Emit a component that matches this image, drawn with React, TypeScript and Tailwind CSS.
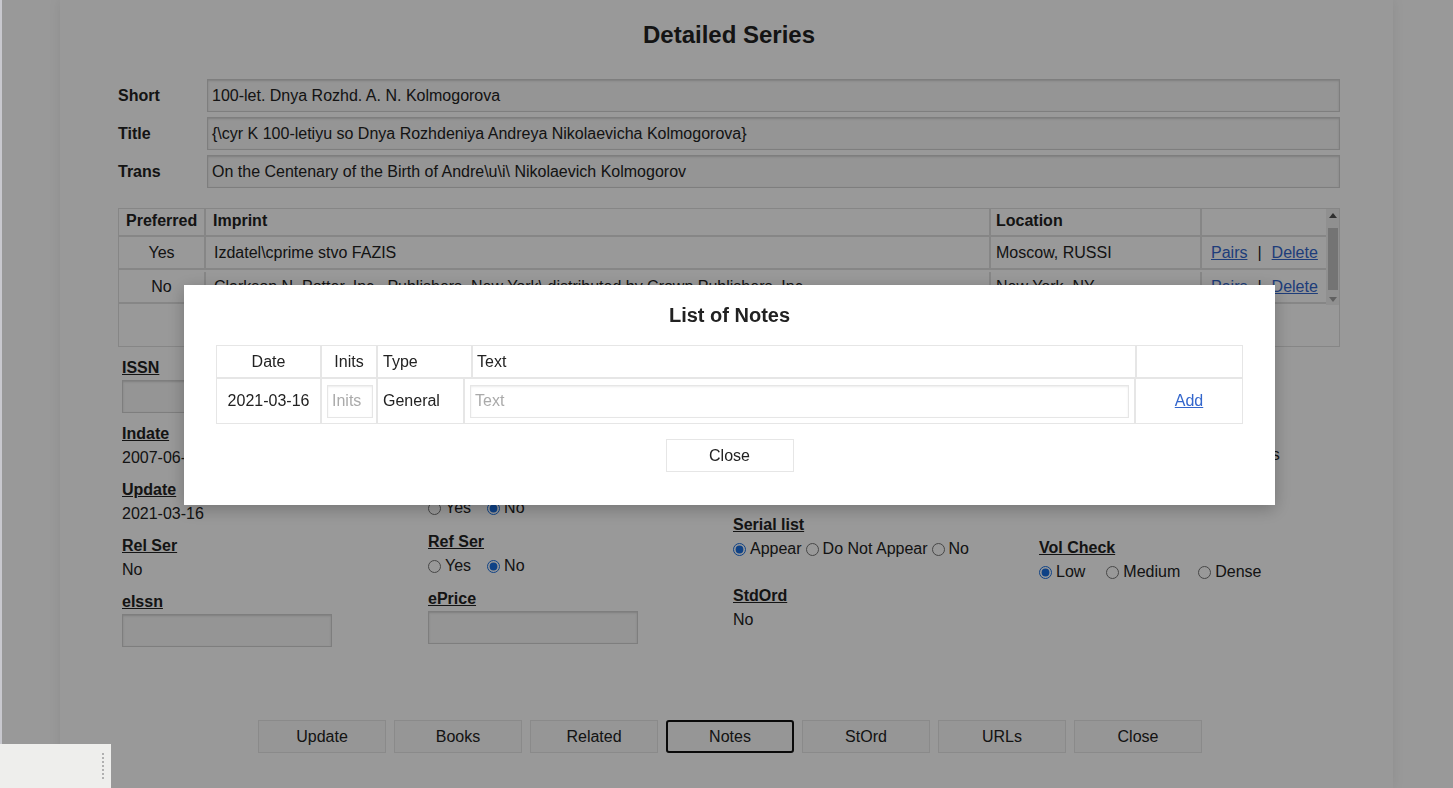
import React from 'react';

const font = "font-['Liberation_Sans',Arial,sans-serif]";

const Label: React.FC<{ children: React.ReactNode }> = ({ children }) => (
  <div className="font-bold underline leading-6 text-[#222]">{children}</div>
);

const Value: React.FC<{ children: React.ReactNode }> = ({ children }) => (
  <div className="leading-6 text-[#222]">{children}</div>
);

const Radio: React.FC<{ name: string; label: string; checked?: boolean; className?: string }> = ({
  name,
  label,
  checked,
  className,
}) => (
  <label className={`inline-flex items-center ${className ?? ''}`}>
    <input type="radio" name={name} defaultChecked={checked} className="m-0 mr-[4px] w-[13px] h-[13px] accent-[#1a6fe0]" />
    <span>{label}</span>
  </label>
);

const TextBox: React.FC<{ value?: string }> = ({ value }) => (
  <div className="flex-1 h-[33px] border border-[#d2d2d2] bg-[#f8f8f8] shadow-[inset_0_1px_2px_rgba(0,0,0,0.15)] px-[4px] flex items-center text-[#222] whitespace-nowrap overflow-hidden">
    {value}
  </div>
);

const imprints = [
  { pref: 'Yes', imprint: 'Izdatel\\cprime stvo FAZIS', loc: 'Moscow, RUSSI', h: 'h-[33px] pt-[1px]' },
  {
    pref: 'No',
    imprint: 'Clarkson N. Potter, Inc., Publishers, New York\\ distributed by Crown Publishers, Inc.',
    loc: 'New York, NY',
    h: 'h-[34px] pt-[2px]',
  },
];

const buttons = ['Update', 'Books', 'Related', 'Notes', 'StOrd', 'URLs', 'Close'];

export default function App() {
  return (
    <div className={`${font} text-[16px] bg-white min-h-screen overflow-hidden`}>
      {/* page */}
      <div className="w-[1333px] mx-auto min-h-[788px] pl-[58px] pr-[53px] pt-[21px] shadow-[0_0_12px_rgba(0,0,0,0.08)]">
        <h1 className="text-center text-[24px] leading-[28px] font-bold text-[#222]">Detailed Series</h1>

        <div className="mt-[30px] space-y-[5px]">
          {[
            ['Short', '100-let. Dnya Rozhd. A. N. Kolmogorova'],
            ['Title', '{\\cyr K 100-letiyu so Dnya Rozhdeniya Andreya Nikolaevicha Kolmogorova}'],
            ['Trans', 'On the Centenary of the Birth of Andre\\u\\i\\ Nikolaevich Kolmogorov'],
          ].map(([l, v]) => (
            <div key={l} className="flex items-center">
              <div className="w-[89px] font-bold text-[#222]">{l}</div>
              <TextBox value={v} />
            </div>
          ))}
        </div>

        {/* imprint table */}
        <div className="mt-5 h-[139px] border border-[#e0e0e0] flex items-start">
          <div className="flex-1">
            <div className="grid grid-cols-[87px_785px_211px_124px] h-[28px] border-b-2 border-[#e0e0e0] font-bold text-[#222]">
              <div className="pl-[7px] pb-[5px] flex items-center border-r-2 border-[#e0e0e0]">Preferred</div>
              <div className="pl-[7px] pb-[5px] flex items-center border-r-2 border-[#e0e0e0]">Imprint</div>
              <div className="pl-[5px] pb-[5px] flex items-center border-r-2 border-[#e0e0e0]">Location</div>
              <div />
            </div>
            {imprints.map((r, i) => (
              <div
                key={i}
                className={`grid grid-cols-[87px_785px_211px_124px] border-b-2 border-[#e0e0e0] text-[#222] ${r.h}`}
              >
                <div className="flex items-center justify-center border-r-2 border-[#e0e0e0]">{r.pref}</div>
                <div className="pl-[8px] flex items-center border-r-2 border-[#e0e0e0] whitespace-nowrap overflow-hidden">
                  {r.imprint}
                </div>
                <div className="pl-[5px] flex items-center border-r-2 border-[#e0e0e0]">{r.loc}</div>
                <div className="pl-[9px] flex items-center gap-[10px] whitespace-nowrap">
                  <a className="text-[#3366cc] underline">Pairs</a>
                  <span>|</span>
                  <a className="text-[#3366cc] underline">Delete</a>
                </div>
              </div>
            ))}
          </div>
          {/* scrollbar */}
          <div className="w-[14px] h-[96px] bg-[#f1f1f1] flex flex-col items-center">
            <div className="h-[12px] flex items-center justify-center">
              <div className="w-0 h-0 border-l-[4px] border-r-[4px] border-b-[5px] border-l-transparent border-r-transparent border-b-[#505050]" />
            </div>
            <div className="mt-[7px] w-[10px] h-[62px] bg-[#c1c1c1]" />
            <div className="flex-1" />
            <div className="h-[12px] flex items-center justify-center">
              <div className="w-0 h-0 border-l-[4px] border-r-[4px] border-t-[5px] border-l-transparent border-r-transparent border-t-[#a0a0a0]" />
            </div>
          </div>
        </div>

        {/* fields */}
        <div className="mt-[9px] pl-1 grid grid-cols-[306px_305px_306px_1fr] text-[#222]">
          <div>
            <Label>ISSN</Label>
            <div className="flex w-[210px]"><TextBox /></div>
            <div className="mt-[9px]"><Label>Indate</Label></div>
            <Value>2007-06-13</Value>
            <div className="mt-2"><Label>Update</Label></div>
            <Value>2021-03-16</Value>
            <div className="mt-2"><Label>Rel Ser</Label></div>
            <Value>No</Value>
            <div className="mt-2"><Label>eIssn</Label></div>
            <div className="flex w-[210px]"><TextBox /></div>
          </div>

          <div>
            <Label>Pub Type</Label>
            <Value>Series</Value>
            <div className="mt-2"><Label>Language</Label></div>
            <Value>Russian</Value>
            <div className="mt-[12px]"><Label>Main Ser</Label></div>
            <div className="leading-6 flex">
              <Radio name="main" label="Yes" className="mr-4" />
              <Radio name="main" label="No" checked />
            </div>
            <div className="mt-[10px]"><Label>Ref Ser</Label></div>
            <div className="leading-6 flex">
              <Radio name="ref" label="Yes" className="mr-4" />
              <Radio name="ref" label="No" checked />
            </div>
            <div className="mt-[9px]"><Label>ePrice</Label></div>
            <div className="flex w-[210px]"><TextBox /></div>
          </div>

          <div>
            <Label>Publisher</Label>
            <div className="flex w-[210px]"><TextBox /></div>
            <div className="mt-2"><Label>Country</Label></div>
            <Value>Russia</Value>
            <div className="mt-[44px]"><Label>Serial list</Label></div>
            <div className="leading-6 flex gap-[4px]">
              <Radio name="serial" label="Appear" checked />
              <Radio name="serial" label="Do Not Appear" />
              <Radio name="serial" label="No" />
            </div>
            <div className="mt-[23px]"><Label>StdOrd</Label></div>
            <Value>No</Value>
          </div>

          <div>
            <Label>Price</Label>
            <div className="flex w-[210px]"><TextBox /></div>
            <div className="mt-[6px]"><Label>Kind</Label></div>
            <Value>Collected Works and Proceedings</Value>
            <div className="mt-[69px]"><Label>Vol Check</Label></div>
            <div className="leading-6 flex">
              <Radio name="vol" label="Low" checked className="mr-[21px]" />
              <Radio name="vol" label="Medium" className="mr-[18px]" />
              <Radio name="vol" label="Dense" />
            </div>
          </div>
        </div>

        <div className="mt-[73px] pl-[2px] flex justify-center gap-2">
          {buttons.map(b => (
            <button
              key={b}
              className={`w-[128px] h-[33px] text-[#222] bg-[#fafafa] ${
                b === 'Notes' ? 'border-2 border-[#111] rounded-[3px]' : 'border border-[#e6e6e6]'
              }`}
            >
              {b}
            </button>
          ))}
        </div>
      </div>

      {/* modal overlay */}
      <div className="fixed inset-0 z-40 bg-black/40 flex items-center justify-center">
        <div className="ml-[6px] mt-[2px] w-[1091px] h-[220px] bg-white shadow-[0_4px_16px_rgba(0,0,0,0.25)] pt-[18px]">
          <h2 className="text-center text-[20px] leading-6 font-bold text-[#222]">List of Notes</h2>
          <div className="mt-[18px] mx-[32px] border border-[#e6e6e6] text-[#222]">
            <div className="grid grid-cols-[105px_56px_95px_664px_105px] h-[33px] border-b-2 border-[#e6e6e6]">
              <div className="flex items-center justify-center border-r-2 border-[#e6e6e6]">Date</div>
              <div className="flex items-center justify-center border-r-2 border-[#e6e6e6]">Inits</div>
              <div className="flex items-center pl-[5px] border-r-2 border-[#e6e6e6]">Type</div>
              <div className="flex items-center pl-[4px] border-r-2 border-[#e6e6e6]">Text</div>
              <div />
            </div>
            <div className="grid grid-cols-[105px_56px_87px_671px_106px] h-[44px]">
              <div className="flex items-center justify-center border-r-2 border-[#e6e6e6]">2021-03-16</div>
              <div className="flex items-center pl-[5px] border-r-2 border-[#e6e6e6]">
                <input
                  placeholder="Inits"
                  className="w-[46px] h-[33px] border border-[#e6e6e6] shadow-[inset_0_1px_2px_rgba(0,0,0,0.08)] px-[4px] text-[16px] placeholder:text-[#aaa] outline-none"
                />
              </div>
              <div className="flex items-center pl-[5px] border-r-2 border-[#e6e6e6]">General</div>
              <div className="flex items-center px-[5px] border-r-2 border-[#e6e6e6]">
                <input
                  placeholder="Text"
                  className="w-full h-[33px] border border-[#e6e6e6] shadow-[inset_0_1px_2px_rgba(0,0,0,0.08)] px-[4px] text-[16px] placeholder:text-[#aaa] outline-none"
                />
              </div>
              <div className="flex items-center justify-center">
                <a className="text-[#3366cc] underline">Add</a>
              </div>
            </div>
          </div>
          <button className="block mx-auto mt-[15px] w-[128px] h-[33px] border border-[#e6e6e6] bg-white text-[#222]">
            Close
          </button>
        </div>
      </div>

      {/* left edge + corner grip */}
      <div className="fixed left-0 top-0 bottom-0 w-[2px] z-50 bg-[#c8c8ce]" />
      <div className="fixed left-0 bottom-0 z-50 w-[111px] h-[44px] bg-[#eeeeec] flex items-center">
        <div className="ml-[102px] h-[26px] w-[4px] border-l-2 border-r-0 border-dotted border-[#b0b0b0]" />
      </div>
    </div>
  );
}
